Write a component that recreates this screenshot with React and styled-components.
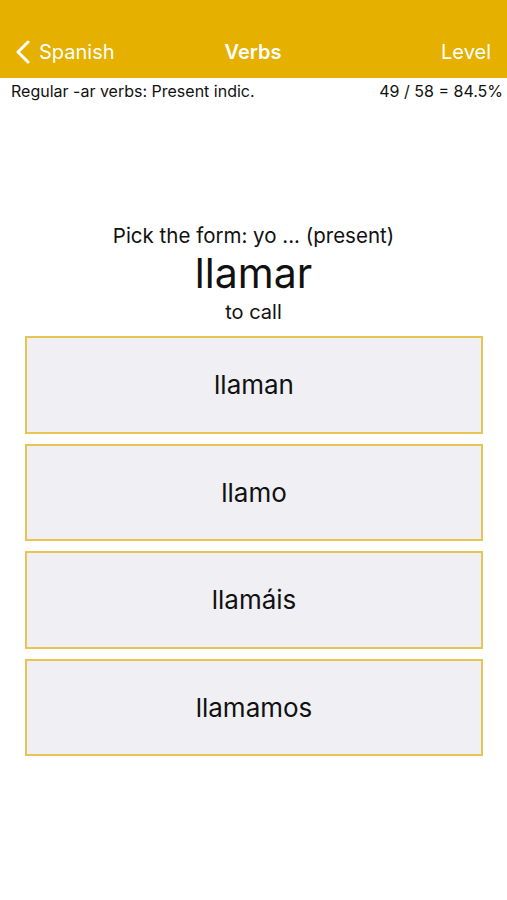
import React from 'react'
import { styled, createGlobalStyle } from 'styled-components'

const GlobalStyle = createGlobalStyle`
  body {
    margin: 0;
    background: #fff;
    font-family: Inter, "Noto Sans", sans-serif;
    color: #111;
  }
`

const Page = styled.div`
  width: 507px;
  height: 900px;
  display: flex;
  flex-direction: column;
`

const NavBar = styled.div`
  background: #e5b000;
  height: 78px;
  box-sizing: border-box;
  padding: 0 16px 14px 15px;
  display: grid;
  grid-template-columns: 1fr auto 1fr;
  align-items: end;
  color: #fff;
  font-size: 20px;
`

const Back = styled.div`
  display: flex;
  align-items: center;
  gap: 8px;
`

const Title = styled.div`
  font-weight: 600;
`

const Right = styled.div`
  text-align: right;
`

const SubBar = styled.div`
  display: flex;
  justify-content: space-between;
  padding: 3px 4px 0 11px;
  font-size: 16px;
  color: #111;
`

const Question = styled.div`
  margin-top: 123px;
  display: flex;
  flex-direction: column;
  align-items: center;
`

const Prompt = styled.div`
  font-size: 20.5px;
  line-height: 24px;
`

const Verb = styled.div`
  font-size: 41px;
  line-height: 51px;
`

const Meaning = styled.div`
  font-size: 20px;
  line-height: 26px;
`

const Choices = styled.div`
  margin: 11px 24px 0 25px;
  display: flex;
  flex-direction: column;
  gap: 10px;
`

const Choice = styled.button`
  height: 97.5px;
  box-sizing: border-box;
  border: 2px solid #e8c552;
  background: #efeff4;
  font-family: inherit;
  font-size: 26px;
  color: #111;
  padding: 0;
`

const options = ['llaman', 'llamo', 'llamáis', 'llamamos']

export default function App() {
  return (
    <Page>
      <GlobalStyle />
      <NavBar>
        <Back>
          <svg width="16" height="24" viewBox="0 0 16 24">
            <path d="M13 2 L3 12 L13 22" fill="none" stroke="#fff" strokeWidth="3" strokeLinecap="round" strokeLinejoin="round" />
          </svg>
          Spanish
        </Back>
        <Title>Verbs</Title>
        <Right>Level</Right>
      </NavBar>
      <SubBar>
        <span>Regular -ar verbs: Present indic.</span>
        <span>49 / 58 = 84.5%</span>
      </SubBar>
      <Question>
        <Prompt>Pick the form: yo ... (present)</Prompt>
        <Verb>llamar</Verb>
        <Meaning>to call</Meaning>
      </Question>
      <Choices>
        {options.map(o => (
          <Choice key={o}>{o}</Choice>
        ))}
      </Choices>
    </Page>
  )
}
